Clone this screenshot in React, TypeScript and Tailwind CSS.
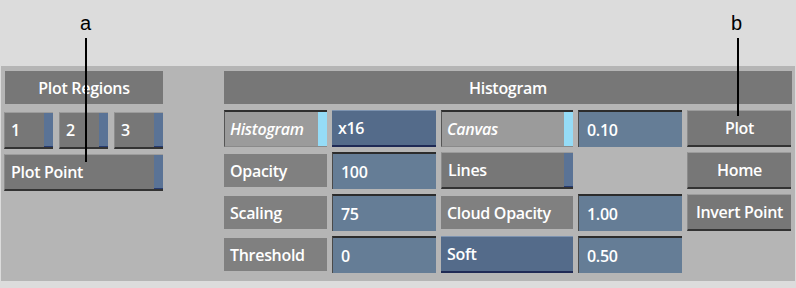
const font = { fontFamily: '"Open Sans", "DejaVu Sans", sans-serif' };

function Btn({ label, stripe, center, className = "" }: { label: string; stripe?: boolean; center?: boolean; className?: string }) {
  return (
    <div className={`flex h-[37px] bg-[#777777] border-t border-t-[#9c9c9c] border-l border-l-[#8c8c8c] border-b-2 border-b-[#333333] ${className}`}>
      <div className={`flex-1 flex items-center px-[6px] text-white text-[16px] tracking-[-0.3px] font-semibold ${center ? "justify-center" : ""}`}>{label}</div>
      {stripe && <div className="w-[9px] bg-[#5a7396] border-b border-b-[#283c70]" />}
    </div>
  );
}

function Toggle({ label }: { label: string }) {
  return (
    <div className="flex h-[37px] bg-[#9b9b9b] border-t-2 border-t-[#2e2e2e] border-l border-l-[#555555] border-b border-b-[#8a8a8a]">
      <div className="flex-1 flex items-center px-[5px] text-white text-[16px] tracking-[-0.3px] font-semibold italic">{label}</div>
      <div className="w-[9px] bg-[#95dcf7]" />
    </div>
  );
}

function Field({ value }: { value: string }) {
  return (
    <div className="flex items-center h-[37px] px-[8px] bg-[#657d96] border-t-2 border-t-[#2c2c2c] border-l border-l-[#4a4a4a] text-white text-[16px] tracking-[-0.3px] font-semibold">
      {value}
    </div>
  );
}

function BlueBtn({ label }: { label: string }) {
  return (
    <div className="flex items-center h-[37px] px-[6px] bg-[#546b8a] border-t border-t-[#7d93b0] border-b-2 border-b-[#1f2a55] text-white text-[16px] tracking-[-0.3px] font-semibold">
      {label}
    </div>
  );
}

function Flat({ label }: { label: string }) {
  return (
    <div className="flex items-center h-[33px] my-[2px] px-[6px] bg-[#808080] text-white text-[16px] tracking-[-0.3px] font-semibold">{label}</div>
  );
}

export default function App() {
  return (
    <div className="relative w-[796px] h-[288px] bg-[#dcdcdc] overflow-hidden" style={font}>
      <div className="h-[66px]" />
      <div className="ml-[1px] w-[794px] h-[215px] bg-[#b5b5b5] flex pt-[5px]">
        <div className="ml-[3px] w-[159px] flex flex-col">
          <div className="ml-[1px] h-[33px] bg-[#777777] flex items-center justify-center text-white text-[16px] tracking-[-0.3px] font-semibold">Plot Regions</div>
          <div className="mt-[8px] flex gap-[6px]">
            <Btn label="1" stripe className="w-[50px]" />
            <Btn label="2" stripe className="w-[50px]" />
            <Btn label="3" stripe className="w-[50px]" />
          </div>
          <Btn label="Plot Point" stripe className="mt-[5px] w-[159px]" />
        </div>
        <div className="ml-[61px] w-[568px] flex flex-col">
          <div className="h-[33px] bg-[#777777] flex items-center justify-center text-white text-[16px] tracking-[-0.3px] font-semibold">Histogram</div>
          <div className="mt-[6px] grid grid-cols-[103px_104px_132px_104px_104px] gap-x-[5px] gap-y-[5px]">
            <Toggle label="Histogram" />
            <BlueBtn label="x16" />
            <Toggle label="Canvas" />
            <Field value="0.10" />
            <Btn label="Plot" center />

            <Flat label="Opacity" />
            <Field value="100" />
            <Btn label="Lines" stripe />
            <div />
            <Btn label="Home" center />

            <Flat label="Scaling" />
            <Field value="75" />
            <Flat label="Cloud Opacity" />
            <Field value="1.00" />
            <Btn label="Invert Point" center />

            <Flat label="Threshold" />
            <Field value="0" />
            <BlueBtn label="Soft" />
            <Field value="0.50" />
            <div />
          </div>
        </div>
      </div>
      <div className="h-[7px]" />

      <div className="absolute left-[80px] top-[13px] text-[20px] leading-none text-black" style={{ fontFamily: '"Liberation Sans", sans-serif' }}>a</div>
      <div className="absolute left-[85px] top-[38px] w-[2px] h-[124px] bg-black" />
      <div className="absolute left-[731px] top-[13px] text-[20px] leading-none text-black" style={{ fontFamily: '"Liberation Sans", sans-serif' }}>b</div>
      <div className="absolute left-[737px] top-[38px] w-[2px] h-[78px] bg-black" />
    </div>
  );
}
